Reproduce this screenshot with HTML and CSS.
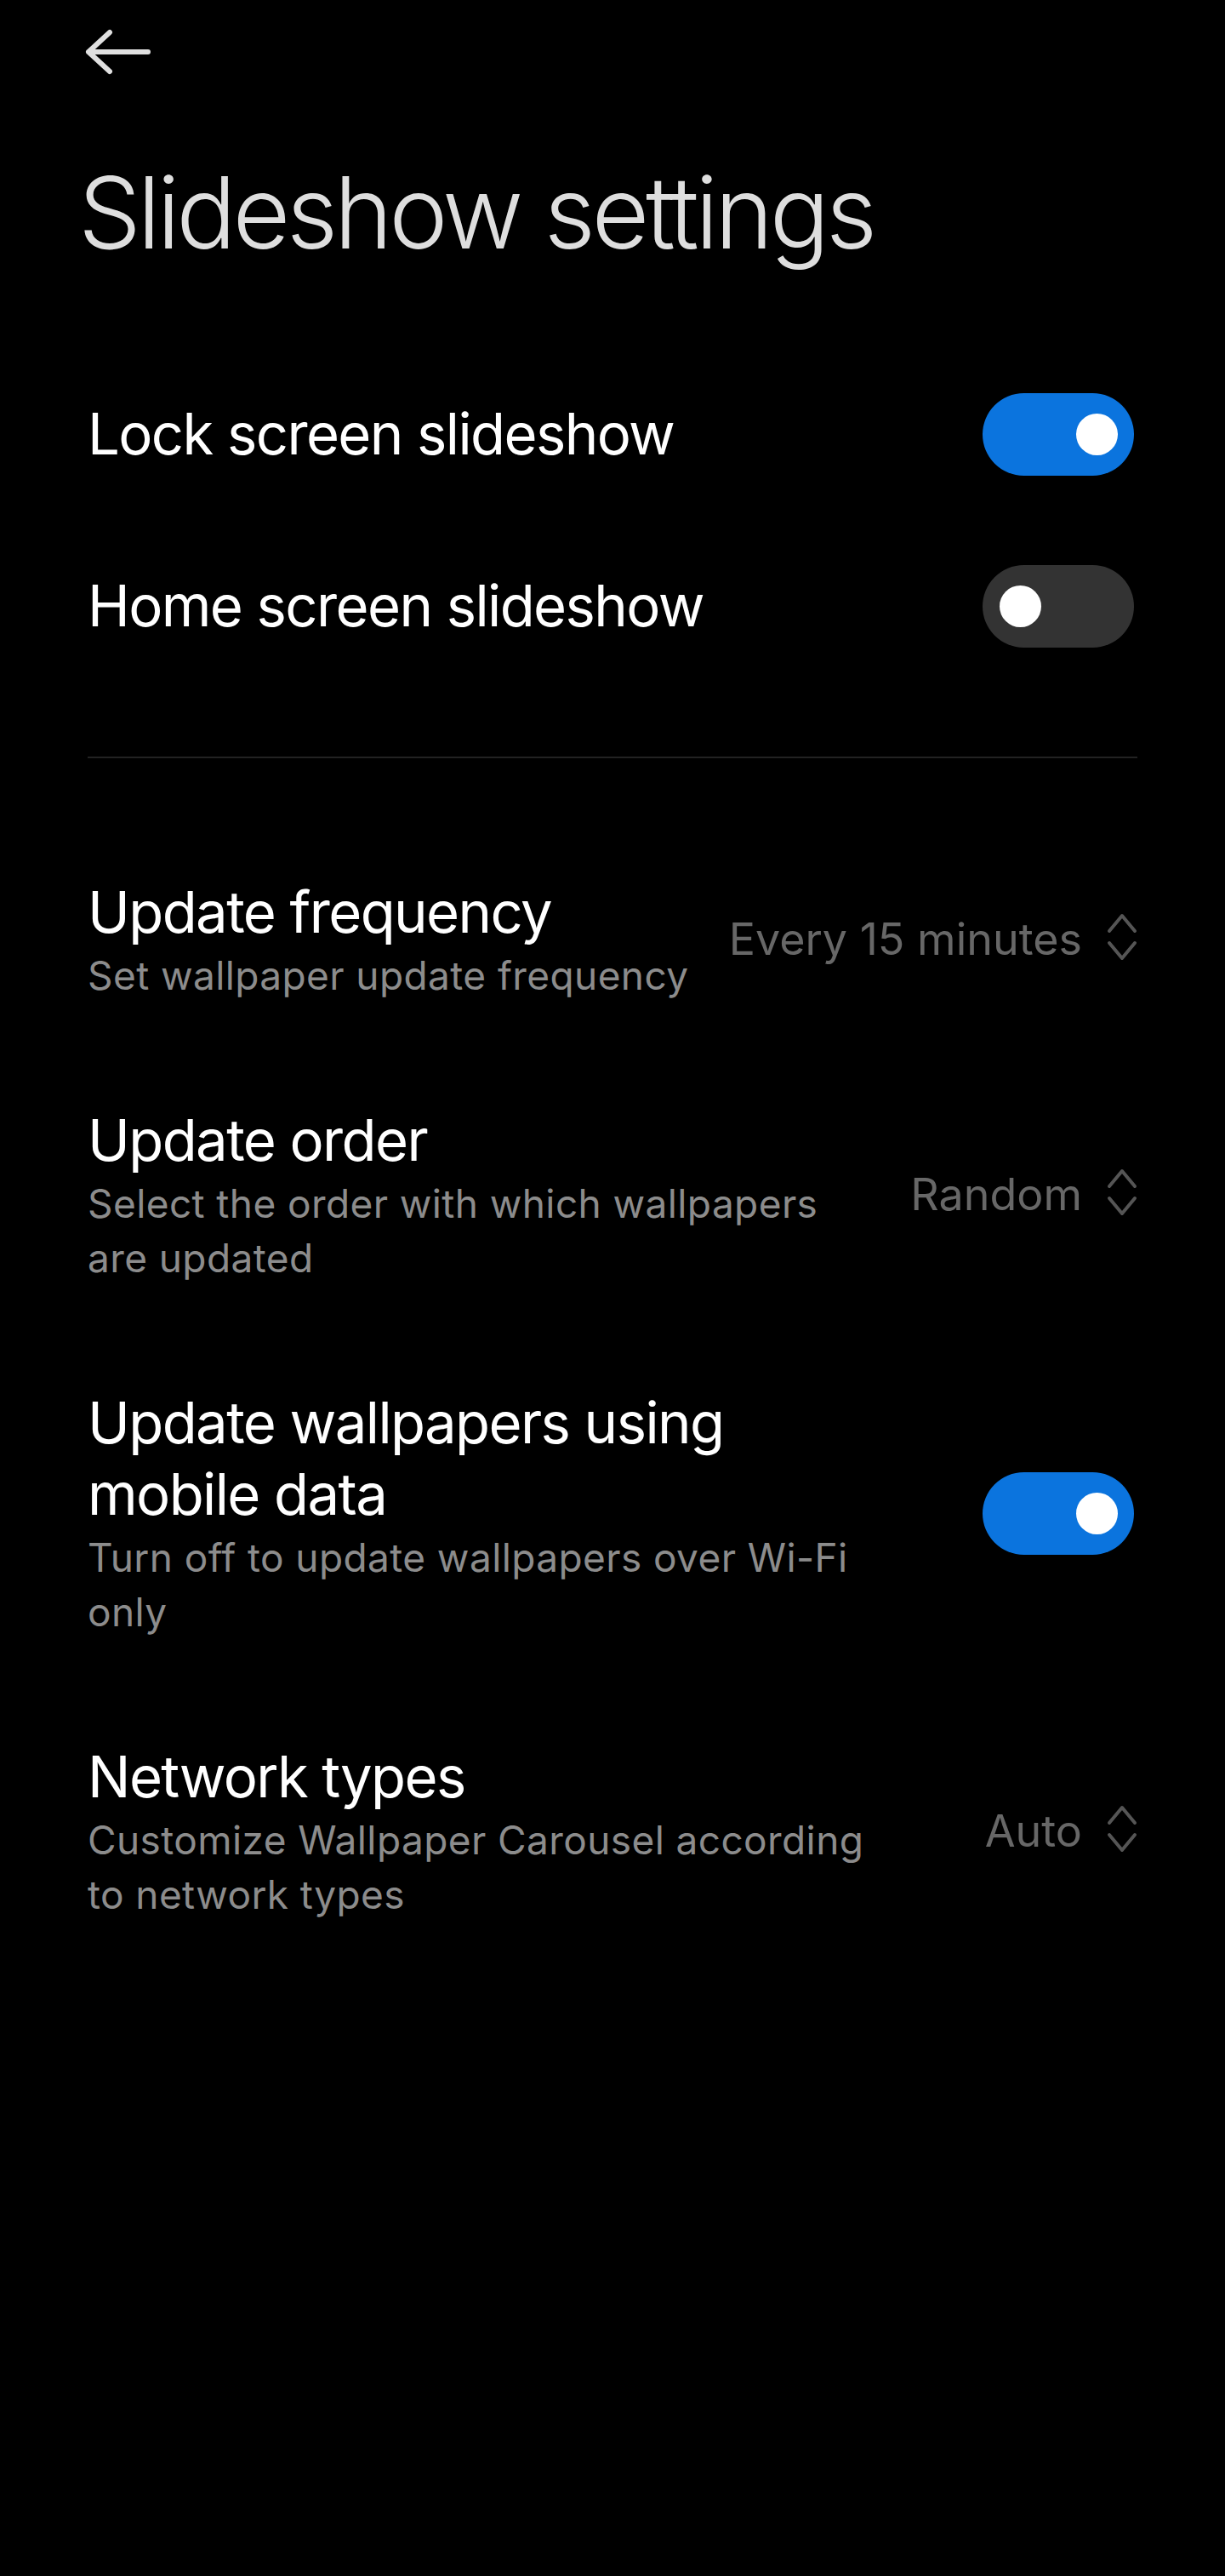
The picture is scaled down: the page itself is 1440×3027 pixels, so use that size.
FILE: index.html
```html
<!DOCTYPE html>
<html lang="en">
<head>
<meta charset="utf-8">
<title>Slideshow settings</title>
<link rel="stylesheet" href="styles.css">
</head>
<body>
<div class="page">
  <header class="topbar">
    <button class="back" aria-label="Back">
      <svg class="back-icon" viewBox="0 0 78 56" width="78" height="56">
        <path d="M29 5 L4 28 L29 51 M4 28 L74 28" fill="none" stroke="#e0e0e0" stroke-width="6" stroke-linecap="round" stroke-linejoin="round"/>
      </svg>
    </button>
  </header>

  <h1 class="page-title">Slideshow settings</h1>

  <section class="group switches">
    <div class="row row-switch">
      <div class="text"><div class="label">Lock screen slideshow</div></div>
      <span class="switch on"><span class="knob"></span></span>
    </div>
    <div class="row row-switch">
      <div class="text"><div class="label">Home screen slideshow</div></div>
      <span class="switch"><span class="knob"></span></span>
    </div>
  </section>

  <hr class="divider">

  <section class="group options">
    <div class="row">
      <div class="text">
        <div class="label">Update frequency</div>
        <div class="summary">Set wallpaper update frequency</div>
      </div>
      <div class="value">
        <span class="value-text">Every 15 minutes</span>
        <svg class="updown" viewBox="0 0 36 56" width="36" height="56"><path d="M3 21 L18 3 L33 21 M3 35 L18 53 L33 35" fill="none" stroke="#555" stroke-width="4" stroke-linecap="round" stroke-linejoin="round"/></svg>
      </div>
    </div>
    <div class="row">
      <div class="text">
        <div class="label">Update order</div>
        <div class="summary">Select the order with which wallpapers are updated</div>
      </div>
      <div class="value">
        <span class="value-text">Random</span>
        <svg class="updown" viewBox="0 0 36 56" width="36" height="56"><path d="M3 21 L18 3 L33 21 M3 35 L18 53 L33 35" fill="none" stroke="#555" stroke-width="4" stroke-linecap="round" stroke-linejoin="round"/></svg>
      </div>
    </div>
    <div class="row">
      <div class="text">
        <div class="label">Update wallpapers using mobile data</div>
        <div class="summary">Turn off to update wallpapers over Wi-Fi only</div>
      </div>
      <span class="switch on"><span class="knob"></span></span>
    </div>
    <div class="row">
      <div class="text">
        <div class="label">Network types</div>
        <div class="summary">Customize Wallpaper Carousel according to network types</div>
      </div>
      <div class="value">
        <span class="value-text">Auto</span>
        <svg class="updown" viewBox="0 0 36 56" width="36" height="56"><path d="M3 21 L18 3 L33 21 M3 35 L18 53 L33 35" fill="none" stroke="#555" stroke-width="4" stroke-linecap="round" stroke-linejoin="round"/></svg>
      </div>
    </div>
  </section>
</div>
</body>
</html>
```

FILE: styles.css
```css
html, body {
  margin: 0;
  padding: 0;
  background: #000;
}

body {
  font-family: Inter, "Noto Sans", "Liberation Sans", sans-serif;
  color: #fff;
  min-height: 3027px;
}

.page {
  display: flex;
  flex-direction: column;
}

.topbar {
  height: 122px;
  display: flex;
  align-items: center;
  padding-left: 100px;
}

.back {
  background: none;
  border: 0;
  padding: 0;
  margin: 0;
  display: flex;
  cursor: pointer;
}

.back-icon {
  display: block;
}

.page-title {
  margin: 58px 0 0 0;
  padding-left: 92px;
  font-size: 117px;
  line-height: 140px;
  font-weight: 300;
  color: #dedede;
  letter-spacing: -4.4px;
}

.group {
  display: flex;
  flex-direction: column;
  padding: 0 103px;
}

.switches {
  margin-top: 89px;
}

.row {
  display: flex;
  align-items: center;
  justify-content: space-between;
  gap: 40px;
  padding: 60px 0;
}

.row-switch {
  min-height: 202px;
  padding: 0;
  box-sizing: border-box;
}

.text {
  display: flex;
  flex-direction: column;
  max-width: 925px;
}

.label {
  font-size: 67px;
  line-height: 84px;
  font-weight: 400;
  color: #fff;
  letter-spacing: -1.6px;
}

.summary {
  font-size: 46px;
  line-height: 64px;
  color: #8c8c8c;
  letter-spacing: 0.4px;
}

.divider {
  margin: 76px 103px 0;
  border: 0;
  height: 2px;
  background: #222;
}

.options {
  margin-top: 79px;
}

.value {
  display: flex;
  align-items: center;
  gap: 29px;
  flex-shrink: 0;
}

.value-text {
  font-size: 52px;
  line-height: 64px;
  color: #676767;
}

.updown {
  display: block;
  margin-top: -6px;
}

.switch {
  position: relative;
  flex-shrink: 0;
  width: 178px;
  height: 97px;
  margin-right: 4px;
  border-radius: 49px;
  background: #333;
}

.switch.on {
  background: #0b74de;
}

.knob {
  position: absolute;
  top: 24px;
  left: 20px;
  width: 49px;
  height: 49px;
  border-radius: 50%;
  background: #fff;
}

.switch.on .knob {
  left: auto;
  right: 19px;
}
```
